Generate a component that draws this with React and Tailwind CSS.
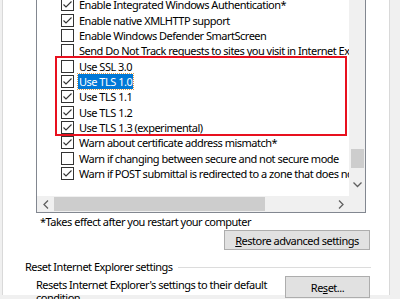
import React from 'react';

const rows = [
  { label: 'Enable Integrated Windows Authentication*', checked: true },
  { label: 'Enable native XMLHTTP support', checked: true },
  { label: 'Enable Windows Defender SmartScreen', checked: false },
  { label: 'Send Do Not Track requests to sites you visit in Internet Explorer', checked: false },
  { label: 'Use SSL 3.0', checked: false },
  { label: 'Use TLS 1.0', checked: true, selected: true },
  { label: 'Use TLS 1.1', checked: true },
  { label: 'Use TLS 1.2', checked: true },
  { label: 'Use TLS 1.3 (experimental)', checked: true },
  { label: 'Warn about certificate address mismatch*', checked: true },
  { label: 'Warn if changing between secure and not secure mode', checked: false },
  { label: 'Warn if POST submittal is redirected to a zone that does not permit posts', checked: true },
];

const CheckBox = ({ checked }) => (
  <div className="w-[13px] h-[13px] shrink-0 border border-[#333333] bg-white flex items-center justify-center">
    {checked && (
      <svg width="11" height="11" viewBox="0 0 11 11">
        <path d="M1.5 5.5 L4 8 L9.5 2.5" fill="none" stroke="#333333" strokeWidth="1.1" />
      </svg>
    )}
  </div>
);

const App = () => {
  return (
    <div
      className="relative w-[400px] h-[299px] overflow-hidden bg-[#f0f0f0] text-[11px] tracking-[-0.5px] text-black leading-none"
      style={{ fontFamily: '"Noto Sans", "Open Sans", sans-serif' }}
    >
      <div className="ml-[2px] w-[388px] h-[299px] bg-white border-l border-r border-[#d9d9d9]">
        {/* tree list */}
        <div className="ml-[33px] -mt-[4px] w-[330px] border border-[#828790] flex flex-col">
          <div className="flex h-[199px]">
            <div className="w-[312px] overflow-hidden flex flex-col">
              {rows.map((r) => (
                <div key={r.label} className="h-[15.37px] shrink-0 flex items-center pl-[24px] gap-[4px] whitespace-nowrap">
                  <CheckBox checked={r.checked} />
                  <span
                    className={
                      r.selected
                        ? 'bg-[#0078d7] text-white px-[1px] py-[2px] outline outline-1 outline-dotted outline-[#d89a4a]'
                        : 'px-[1px]'
                    }
                  >
                    {r.label}
                  </span>
                </div>
              ))}
            </div>
            {/* vertical scrollbar */}
            <div className="w-[16px] bg-[#f0f0f0] flex flex-col items-center">
              <div className="mt-[152px] w-[13px] h-[19px] bg-[#cdcdcd]" />
              <div className="mt-[8px] h-[17px] flex items-center">
                <svg width="9" height="6" viewBox="0 0 9 6">
                  <path d="M0.5 0.5 L4.5 4.5 L8.5 0.5" fill="none" stroke="#606060" strokeWidth="1.3" />
                </svg>
              </div>
            </div>
          </div>
          {/* horizontal scrollbar */}
          <div className="flex h-[16px]">
            <div className="w-[312px] bg-[#f0f0f0] flex items-center">
              <div className="w-[17px] flex justify-center">
                <svg width="6" height="9" viewBox="0 0 6 9">
                  <path d="M5 0.5 L1 4.5 L5 8.5" fill="none" stroke="#606060" strokeWidth="1.3" />
                </svg>
              </div>
              <div className="w-[211px] h-[14px] bg-[#cdcdcd]" />
              <div className="flex-1" />
              <div className="w-[17px] flex justify-center">
                <svg width="6" height="9" viewBox="0 0 6 9">
                  <path d="M1 0.5 L5 4.5 L1 8.5" fill="none" stroke="#606060" strokeWidth="1.3" />
                </svg>
              </div>
            </div>
            <div className="w-[16px] bg-[#f0f0f0]" />
          </div>
        </div>

        <div className="ml-[37px] mt-[2px] leading-[14px]">*Takes effect after you restart your computer</div>

        <div className="flex justify-end pr-[19px] mt-[1px]">
          <button className="w-[146px] h-[20px] bg-[#e1e1e1] border border-[#adadad] leading-none">
            <span className="underline">R</span>estore advanced settings
          </button>
        </div>

        <div className="flex items-center ml-[22px] mr-[18px] mt-[10px] gap-[5px]">
          <span className="whitespace-nowrap leading-[14px]">Reset Internet Explorer settings</span>
          <div className="flex-1 h-px bg-[#dcdcdc]" />
        </div>

        <div className="flex mt-[2px] ml-[33px] mr-[19px] gap-[2px]">
          <div className="flex-1 leading-[13px] pt-[2px]">
            Resets Internet Explorer's settings to their default condition.
          </div>
          <button className="w-[85px] h-[22px] shrink-0 bg-[#e1e1e1] border border-[#adadad] leading-none">
            Re<span className="underline">s</span>et...
          </button>
        </div>
      </div>

      {/* red annotation frame */}
      <div className="absolute left-[55px] top-[56px] w-[292px] h-[80px] border-2 border-[#e8101e]" />
    </div>
  );
};

export default App;
